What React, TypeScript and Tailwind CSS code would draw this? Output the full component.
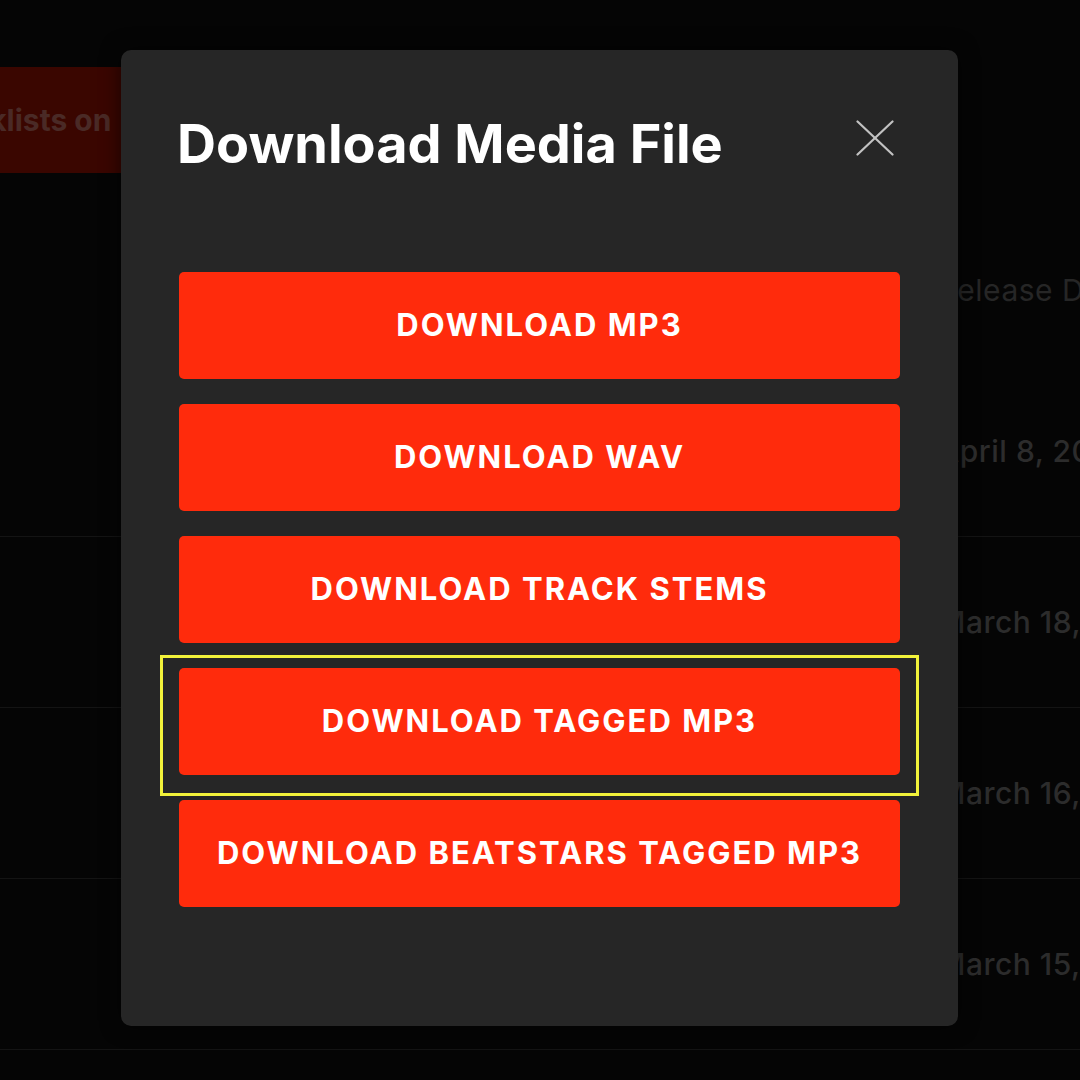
const dates = ["April 8, 2024", "March 18, 2024", "March 16, 2024", "March 15, 2024"];

const options = [
    "DOWNLOAD MP3",
    "DOWNLOAD WAV",
    "DOWNLOAD TRACK STEMS",
    "DOWNLOAD TAGGED MP3",
    "DOWNLOAD BEATSTARS TAGGED MP3",
];

function BackdropPage() {
    return (
        <div className="w-full h-full bg-[#050505] overflow-hidden">
            <div className="pt-[67px] flex">
                <div className="h-[106px] w-[260px] bg-[#3a0600] flex items-center overflow-hidden">
                    <span className="ml-[-76px] text-[30px] font-bold text-[#4a2a26] whitespace-nowrap">Tracklists on</span>
                </div>
            </div>

            <div className="pl-[938px] pt-[95px] h-[193px] text-[30px] tracking-[0.5px] text-[#262626] whitespace-nowrap">Release Date</div>

            {dates.map((d) => (
                <div key={d} className="h-[171px] border-b border-[#141414] flex items-center pl-[938px] text-[30px] tracking-[0.5px] font-medium text-[#2c2c2c] whitespace-nowrap">
                    {d}
                </div>
            ))}
        </div>
    );
}

export default function App() {
    return (
        <div className="relative w-[1080px] h-[1080px] overflow-hidden font-['Inter','Liberation_Sans',sans-serif]">
            <BackdropPage />

            {/* Modal */}
            <div className="absolute left-[121px] top-[50px] w-[837px] h-[976px] bg-[#262626] rounded-[10px] shadow-[0_0_20px_rgba(0,0,0,0.6)] px-[58px] pt-[67px] flex flex-col">
                <div className="flex items-start justify-between">
                    <h2 className="text-[54px] leading-[54px] font-bold text-white -ml-[2px]">Download Media File</h2>
                    <button className="mt-[3px] mr-[6px] text-[#c2c2c2]">
                        <svg width="38" height="36" viewBox="0 0 38 36" fill="none" stroke="currentColor" strokeWidth="2.2" strokeLinecap="round">
                            <path d="M1.5 1.5 L36.5 34.5" />
                            <path d="M36.5 1.5 L1.5 34.5" />
                        </svg>
                    </button>
                </div>

                <div className="mt-[101px] flex flex-col gap-[25px]">
                    {options.map((o) => (
                        <div key={o} className="relative">
                            {o === "DOWNLOAD TAGGED MP3" && (
                                <div className="absolute -left-[19px] -right-[19px] -top-[13px] -bottom-[21px] border-[3px] border-[#f2f23a] pointer-events-none" />
                            )}
                            <button className="w-full h-[107px] rounded-[5px] bg-[#ff2b0c] text-white text-[31px] font-bold tracking-[2px]">
                                {o}
                            </button>
                        </div>
                    ))}
                </div>
            </div>
        </div>
    );
}
